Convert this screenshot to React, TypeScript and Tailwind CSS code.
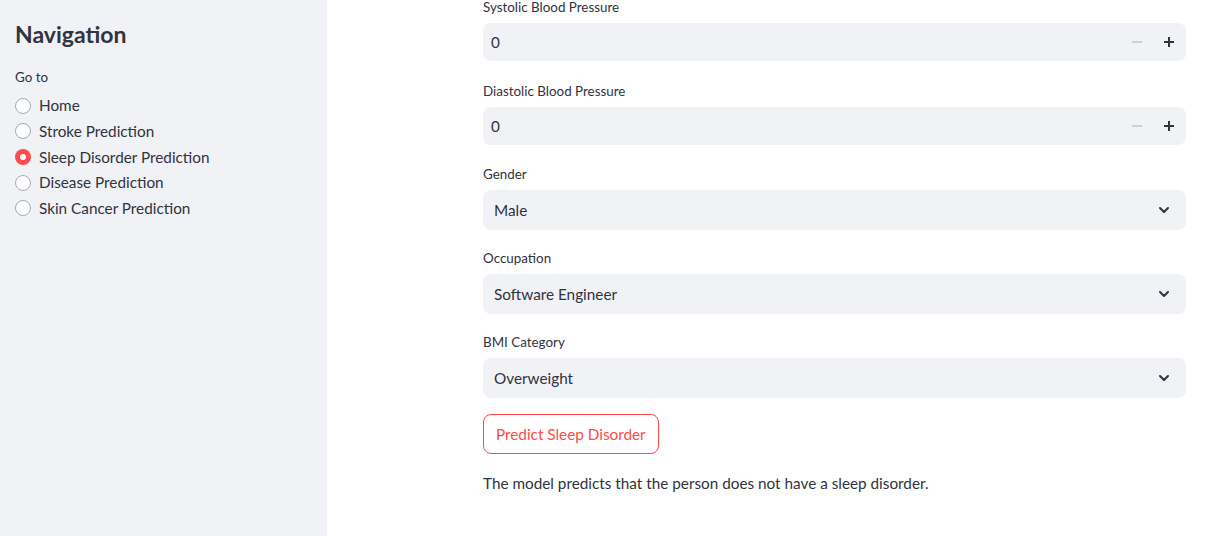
import { ChevronDown } from "lucide-react";

const pages = [
  "Home",
  "Stroke Prediction",
  "Sleep Disorder Prediction",
  "Disease Prediction",
  "Skin Cancer Prediction",
];

function NumberField({ label, className = "" }: { label: string; className?: string }) {
  return (
    <div className={className}>
      <div className="h-[22px] mb-[5px] flex items-center text-[13.4px]">{label}</div>
      <div className="h-[38px] rounded-lg bg-[#f0f2f6] flex items-center">
        <span className="flex-1 pl-2 text-[15.3px]">0</span>
        <div className="w-8 h-full flex items-center justify-center">
          <svg width="10" height="10" viewBox="0 0 10 10">
            <rect x="0" y="4" width="10" height="2" fill="#cdd0d9" />
          </svg>
        </div>
        <div className="w-8 h-full flex items-center justify-center mr-px">
          <svg width="10" height="10" viewBox="0 0 10 10">
            <rect x="0" y="4" width="10" height="2" fill="#31333f" />
            <rect x="4" y="0" width="2" height="10" fill="#31333f" />
          </svg>
        </div>
      </div>
    </div>
  );
}

function SelectField({ label, value, className = "" }: { label: string; value: string; className?: string }) {
  return (
    <div className={className}>
      <div className="h-[22px] mb-[5px] flex items-center text-[13.4px]">{label}</div>
      <div className="h-10 rounded-lg bg-[#f0f2f6] flex items-center pl-[11px] pr-[14px]">
        <span className="flex-1 text-[15.3px]">{value}</span>
        <ChevronDown size={16} strokeWidth={3} className="text-[#31333f]" />
      </div>
    </div>
  );
}

export default function App() {
  return (
    <div
      className="flex w-[1205px] h-[536px] overflow-hidden bg-white text-[#31333f]"
      style={{ fontFamily: '"Source Sans Pro", Lato, "Noto Sans", sans-serif' }}
    >
      {/* Sidebar */}
      <aside className="w-[327px] shrink-0 bg-[#f0f2f6] px-[15px] pt-[20px]">
        <h2 className="text-[23px] font-bold leading-[28px]">Navigation</h2>
        <div className="mt-[19px] text-[13.4px] leading-[21px]">Go to</div>
        <div className="mt-[5px] flex flex-col">
          {pages.map((p) => {
            const on = p === "Sleep Disorder Prediction";
            return (
              <div key={p} className="h-[25.6px] flex items-center gap-2">
                {on ? (
                  <span className="w-4 h-4 rounded-full bg-[#ff4b4b] flex items-center justify-center">
                    <span className="w-[6px] h-[6px] rounded-full bg-white" />
                  </span>
                ) : (
                  <span className="w-4 h-4 rounded-full bg-white border border-[#a3a8b8]" />
                )}
                <span className="text-[15.3px]">{p}</span>
              </div>
            );
          })}
        </div>
      </aside>

      {/* Main */}
      <main className="flex-1 pl-[156px] pr-[19px]">
        <div className="-mt-1 flex flex-col">
          <NumberField label="Systolic Blood Pressure" className="mb-[19px]" />
          <NumberField label="Diastolic Blood Pressure" className="mb-[18px]" />
          <SelectField label="Gender" value="Male" className="mb-[17px]" />
          <SelectField label="Occupation" value="Software Engineer" className="mb-[17px]" />
          <SelectField label="BMI Category" value="Overweight" className="mb-[16px]" />
          <div>
            <button className="h-10 px-3 rounded-lg border border-[#ff4b4b] text-[#ff4b4b] text-[15.3px] bg-white">
              Predict Sleep Disorder
            </button>
          </div>
          <p className="mt-[17px] text-[15.3px] leading-6">
            The model predicts that the person does not have a sleep disorder.
          </p>
        </div>
      </main>
    </div>
  );
}
